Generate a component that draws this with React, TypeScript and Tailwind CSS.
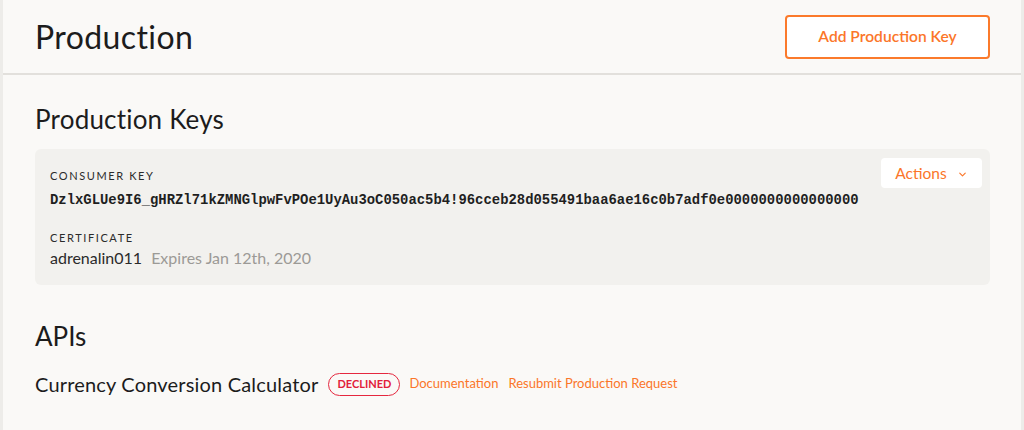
import { ChevronDown } from "lucide-react";

const ORANGE = "text-[#fb7629]";

export default function App() {
  return (
    <div className="h-[430px] w-[1024px] overflow-hidden bg-[#edece9] px-[3px] font-['Lato',sans-serif] text-[#1c1c1c]">
      <div className="h-full bg-[#faf9f7]">
        <header className="flex h-[75px] items-center justify-between border-b-2 border-[#e2e0dc] pl-[32px] pr-[31px]">
          <h1 className="text-[32px] leading-none tracking-[0.4px]">Production</h1>
          <button className="h-[44px] w-[205px] rounded-[4px] border-2 border-[#fb7a2b] bg-white text-[15.6px] font-semibold text-[#fb7629]">
            Add Production Key
          </button>
        </header>

        <section className="pl-[32px] pr-[31px] pt-[28px]">
          <h2 className="text-[26px] leading-[32px] tracking-[0.2px]">Production Keys</h2>

          <div className="mt-[14px] flex h-[136px] justify-between rounded-[6px] bg-[#f2f1ee] pl-[15px] pr-[8px] pt-[20px]">
            <div>
              <div className="text-[11px] leading-[14px] tracking-[1.6px] text-[#2b2b2b]">CONSUMER KEY</div>
              <div className="mt-[8px] font-['Liberation_Mono',monospace] text-[13.9px] font-bold leading-[18px] text-[#1f1f1f]">
                DzlxGLUe9I6_gHRZl71kZMNGlpwFvPOe1UyAu3oC050ac5b4!96cceb28d055491baa6ae16c0b7adf0e0000000000000000
              </div>
              <div className="mt-[22px] text-[11px] leading-[14px] tracking-[1.6px] text-[#2b2b2b]">CERTIFICATE</div>
              <div className="mt-[3px] flex items-baseline gap-[9px] text-[16px] leading-[20px]">
                <span className="text-[#2a2a2a]">adrenalin011</span>
                <span className="text-[#9c9a96]">Expires Jan 12th, 2020</span>
              </div>
            </div>
            <div className="-mt-[11px]">
              <button className={`flex h-[30px] w-[101px] items-center justify-center gap-[10px] rounded-[4px] bg-white pt-[2px] text-[15.5px] ${ORANGE}`}>
                Actions
                <ChevronDown className="h-[11px] w-[11px]" strokeWidth={2.5} />
              </button>
            </div>
          </div>
        </section>

        <section className="pl-[32px] pt-[35px]">
          <h2 className="text-[26px] leading-[32px]">APIs</h2>
          <div className="mt-[20px] flex items-center">
            <span className="text-[20px] leading-[24px] tracking-[0.18px]">Currency Conversion Calculator</span>
            <span className="ml-[10px] flex h-[23px] items-center rounded-full border border-[#e5283f] px-[8px] text-[11px] font-bold text-[#e2203a]">
              DECLINED
            </span>
            <a className={`ml-[9px] text-[13px] ${ORANGE}`}>Documentation</a>
            <a className={`ml-[10px] text-[13px] ${ORANGE}`}>Resubmit Production Request</a>
          </div>
        </section>
      </div>
    </div>
  );
}
